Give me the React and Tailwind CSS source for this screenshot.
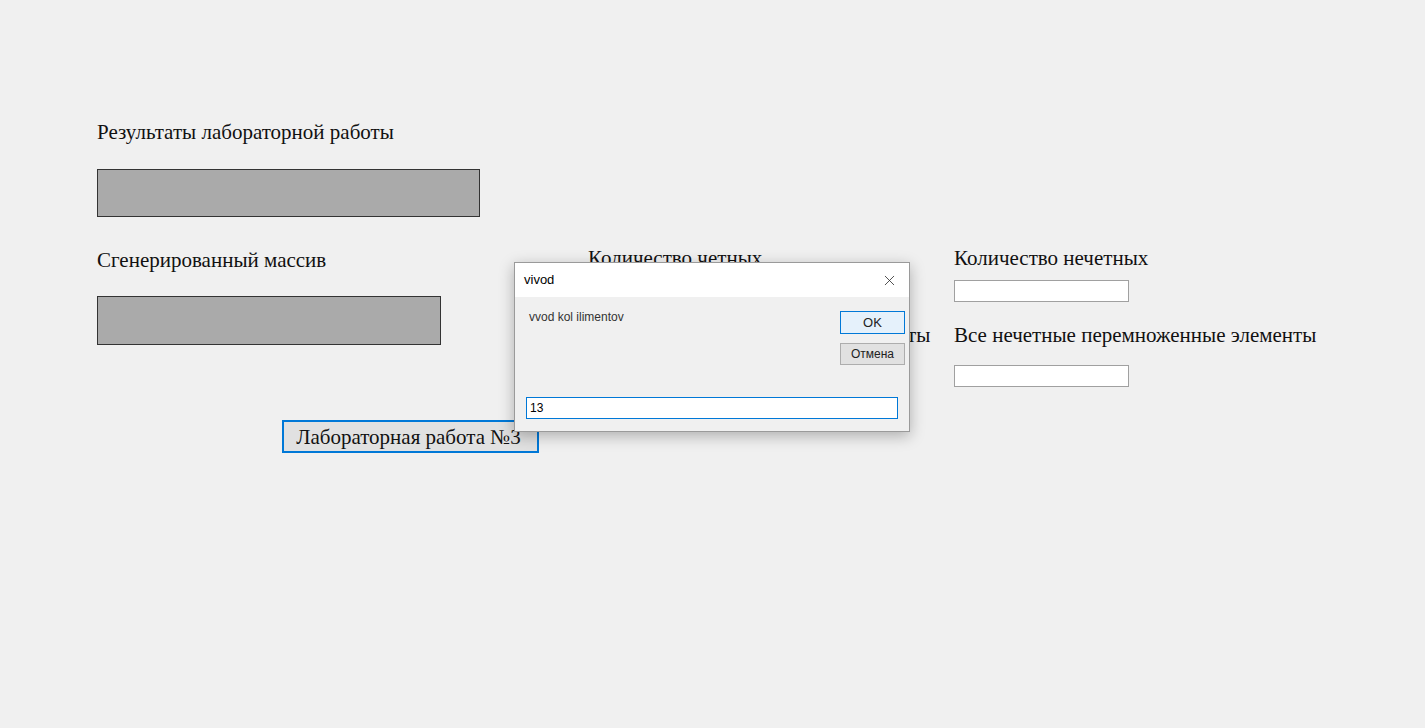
import { X } from "lucide-react";

const serif = "font-['Liberation_Serif','Times_New_Roman',serif]";
const sans = "font-['Liberation_Sans',Arial,sans-serif]";

function Field({ label, className = "", gap = "mt-[10px]" }) {
  return (
    <div className={className}>
      <p className={`${serif} text-[21px] leading-[24px] text-[#111]`}>{label}</p>
      <div className={`${gap} h-[22px] w-[175px] border border-[#a0a0a0] bg-white`} />
    </div>
  );
}

function Dialog() {
  return (
    <div className="absolute left-[514px] top-[262px] w-[396px] border border-[#9a9a9a] bg-[#f0f0f0] shadow-[0_4px_14px_rgba(0,0,0,0.28)]">
      <div className="flex h-[34px] items-center justify-between bg-white pl-[9px] pr-[11px]">
        <span className={`${sans} text-[13px] text-black`}>vivod</span>
        <X size={17} strokeWidth={1.1} className="text-[#222]" />
      </div>
      <div className="flex justify-between pl-[14px] pr-[4px] pt-[11px]">
        <span className={`${sans} text-[12px] text-[#333]`}>vvod kol ilimentov</span>
        <div className="mt-[3px] flex flex-col gap-[9px]">
          <button className={`${sans} h-[23px] w-[65px] border border-[#0078d7] bg-[#e5f1fb] text-[13px] text-[#222]`}>
            OK
          </button>
          <button className={`${sans} h-[22px] w-[65px] border border-[#adadad] bg-[#e1e1e1] text-[12px] text-[#222]`}>
            Отмена
          </button>
        </div>
      </div>
      <div className="px-[11px] pb-[12px] pt-[32px]">
        <div className={`${sans} flex h-[22px] items-center border border-[#0078d7] bg-white px-[3px] text-[12px] text-black`}>
          13
        </div>
      </div>
    </div>
  );
}

export default function App() {
  return (
    <div className="relative h-[728px] w-full overflow-hidden bg-[#f0f0f0]">
      <div className="flex pl-[97px] pt-[120px]">
        <div className="w-[491px]">
          <p className={`${serif} text-[21px] leading-[24px] text-[#111]`}>Результаты лабораторной работы</p>
          <div className="mt-[25px] h-[48px] w-[383px] border border-[#333] bg-[#aaaaaa]" />
          <p className={`${serif} mt-[31px] text-[21px] leading-[24px] text-[#111]`}>Сгенерированный массив</p>
          <div className="mt-[24px] h-[49px] w-[344px] border border-[#333] bg-[#aaaaaa]" />
          <button
            className={`${serif} ml-[185px] mt-[75px] h-[33px] w-[257px] border-2 border-[#0078d7] bg-[#e1e1e1] pr-[4px] text-[21px] leading-[24px] text-[#111]`}
          >
            Лабораторная работа №3
          </button>
        </div>
        <div className="w-[366px] pt-[126px]">
          <Field label="Количество четных" />
          <Field label="Все четные перемноженные элементы" className="mt-[21px]" gap="mt-[18px]" />
        </div>
        <div className="pt-[126px]">
          <Field label="Количество нечетных" />
          <Field label="Все нечетные перемноженные элементы" className="mt-[21px]" gap="mt-[18px]" />
        </div>
      </div>
      <Dialog />
    </div>
  );
}
